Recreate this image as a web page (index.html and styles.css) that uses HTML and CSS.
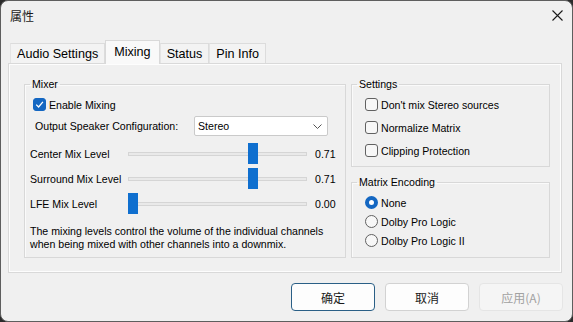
FILE: index.html
```html
<!DOCTYPE html>
<html lang="zh-CN">
<head>
    <meta charset="UTF-8">
    <meta name="viewport" content="width=device-width, initial-scale=1.0">
    <title>属性</title>
    <link rel="stylesheet" href="styles.css">
</head>
<body>
    <div class="window">
        <div class="titlebar">
            <span class="title">属性</span>
            <svg class="close" width="11" height="11" viewBox="0 0 11 11">
                <path d="M0.5 0.5 L10.5 10.5 M10.5 0.5 L0.5 10.5" stroke="#1a1a1a" stroke-width="1.1" fill="none"/>
            </svg>
        </div>

        <div class="tabs">
            <div class="tab">Audio Settings</div>
            <div class="tab active">Mixing</div>
            <div class="tab">Status</div>
            <div class="tab">Pin Info</div>
        </div>

        <div class="panel">
            <div class="columns">
                <fieldset class="group mixer">
                    <legend>Mixer</legend>
                    <div class="check-row enable">
                        <span class="box checked">
                            <svg width="9" height="9" viewBox="0 0 9 9">
                                <path d="M1.2 4.6 L3.6 7 L7.9 1.8" stroke="#fff" stroke-width="1.3" fill="none"/>
                            </svg>
                        </span>
                        Enable Mixing
                    </div>
                    <div class="speaker-row">
                        <span class="speaker-label">Output Speaker Configuration:</span>
                        <div class="select">
                            <span>Stereo</span>
                            <svg width="9" height="5" viewBox="0 0 9 5">
                                <path d="M0.5 0.5 L4.5 4.5 L8.5 0.5" stroke="#555" stroke-width="1" fill="none"/>
                            </svg>
                        </div>
                    </div>
                    <div id="sliderList"></div>
                    <p class="note">The mixing levels control the volume of the individual channels<br>when being mixed with other channels into a downmix.</p>
                </fieldset>

                <div class="side">
                    <fieldset class="group settings">
                        <legend>Settings</legend>
                        <div class="check-row"><span class="box"></span>Don't mix Stereo sources</div>
                        <div class="check-row"><span class="box"></span>Normalize Matrix</div>
                        <div class="check-row"><span class="box"></span>Clipping Protection</div>
                    </fieldset>
                    <fieldset class="group encoding">
                        <legend>Matrix Encoding</legend>
                        <div class="radio-row"><span class="radio on"></span>None</div>
                        <div class="radio-row"><span class="radio"></span>Dolby Pro Logic</div>
                        <div class="radio-row"><span class="radio"></span>Dolby Pro Logic II</div>
                    </fieldset>
                </div>
            </div>
        </div>

        <div class="buttons">
            <button class="btn default">确定</button>
            <button class="btn">取消</button>
            <button class="btn" disabled>应用(A)</button>
        </div>
    </div>

    <script>
        const sliderListDiv = document.getElementById('sliderList');

        const levels = [
            { name: 'Center Mix Level', value: 0.71 },
            { name: 'Surround Mix Level', value: 0.71 },
            { name: 'LFE Mix Level', value: 0 },
        ];

        // track is 179px, thumb is 10px wide
        const travel = 169;

        levels.forEach(level => {
            const row = document.createElement('div');
            row.classList.add('slider-row');
            row.innerHTML = `
                <span class="slider-label">${level.name}</span>
                <div class="track">
                    <div class="rail"></div>
                    <div class="thumb" style="left: ${Math.round(level.value * travel)}px"></div>
                </div>
                <span class="slider-value">${level.value.toFixed(2)}</span>
            `;
            sliderListDiv.appendChild(row);
        });
    </script>
</body>
</html>
```

FILE: styles.css
```css
body {
    margin: 0;
    background-color: #2b2b2b;
}

.window {
    width: 573px;
    height: 322px;
    box-sizing: border-box;
    border: 1px solid #5e5e5e;
    border-radius: 8px;
    background-color: #f0f0f0;
    overflow: hidden;
    display: flex;
    flex-direction: column;
    font-family: "Liberation Sans", "Noto Sans CJK SC", sans-serif;
    font-size: 10.6px;
    color: #000;
}

.titlebar {
    height: 28px;
    flex-shrink: 0;
    display: flex;
    align-items: center;
    justify-content: space-between;
    padding: 0 9px;
}

.title {
    font-family: "Noto Sans CJK SC", sans-serif;
    font-size: 12px;
    color: #1a1a1a;
}

.tabs {
    display: flex;
    align-items: flex-end;
    height: 23px;
    margin-top: 11px;
    padding-left: 9px;
    flex-shrink: 0;
}

.tab {
    height: 20px;
    line-height: 20px;
    padding: 0 6px;
    box-sizing: border-box;
    border: 1px solid #dcdcdc;
    border-bottom: none;
    border-left-color: #e4e4e4;
    background-color: #f3f3f3;
    font-size: 12.6px;
    white-space: nowrap;
}

.tab.active {
    height: 24px;
    line-height: 22px;
    padding: 0 8px;
    margin-bottom: -1px;
    background-color: #f9f9f9;
    border-color: #d9d9d9;
    position: relative;
    z-index: 1;
}

.panel {
    height: 210px;
    margin: 0 10px 0 7px;
    box-sizing: border-box;
    border: 1px solid #d9d9d9;
    box-shadow: inset 0 0 0 1px #fdfdfd;
    padding: 14px 11px 0 15px;
    flex-shrink: 0;
}

.columns {
    display: flex;
    gap: 5px;
}

.group {
    margin: 0;
    padding: 0;
    min-width: 0;
    border: 1px solid #d8d8d8;
    box-shadow: inset 1px 1px 0 #fafafa;
}

.group legend {
    margin-left: 5px;
    padding: 0 2px;
    line-height: 13px;
}

.mixer {
    width: 322px;
    box-sizing: border-box;
    padding-bottom: 6px;
}

.side {
    width: 199px;
    display: flex;
    flex-direction: column;
    gap: 9px;
}

.settings {
    padding-bottom: 9px;
}

.encoding {
    flex: 1;
}

.check-row, .radio-row {
    display: flex;
    align-items: center;
    height: 13px;
    gap: 3px;
    white-space: nowrap;
}

.settings .check-row, .encoding .radio-row {
    padding-left: 13px;
}

.check-row {
    margin-top: 10px;
}

.settings .check-row:first-of-type {
    margin-top: 7px;
}

.check-row.enable {
    margin-top: 7px;
    padding-left: 8px;
}

.radio-row {
    margin-top: 6px;
}

.encoding .radio-row:first-of-type {
    margin-top: 7px;
}

.box {
    width: 13px;
    height: 13px;
    box-sizing: border-box;
    border: 1px solid #616161;
    border-radius: 3px;
    background-color: #f7f7f7;
    display: flex;
    align-items: center;
    justify-content: center;
    flex-shrink: 0;
}

.box.checked {
    background-color: #1467c2;
    border-color: #1467c2;
}

.radio {
    width: 13px;
    height: 13px;
    box-sizing: border-box;
    border: 1px solid #616161;
    border-radius: 50%;
    background-color: #f7f7f7;
    flex-shrink: 0;
}

.radio.on {
    border: 4px solid #1467c2;
    background-color: #fff;
}

.speaker-row {
    display: flex;
    align-items: center;
    margin-top: 5px;
    padding-left: 10px;
    height: 20px;
}

.speaker-label {
    width: 159px;
    white-space: nowrap;
}

.select {
    width: 134px;
    height: 20px;
    box-sizing: border-box;
    border: 1px solid #cacaca;
    border-radius: 2px;
    background-color: #fff;
    display: flex;
    align-items: center;
    justify-content: space-between;
    padding: 0 5px 0 3px;
}

.slider-row {
    display: flex;
    align-items: center;
    height: 21px;
    margin-top: 4px;
    padding-left: 5px;
}

.slider-row:first-child {
    margin-top: 7px;
}

.slider-label {
    width: 98px;
    white-space: nowrap;
}

.track {
    width: 179px;
    height: 21px;
    position: relative;
    display: flex;
    align-items: center;
}

.rail {
    width: 100%;
    height: 2px;
    border: 1px solid #d5d5d5;
    background-color: #e9e9e9;
}

.thumb {
    position: absolute;
    top: 0;
    width: 10px;
    height: 21px;
    background-color: #0f6fcf;
}

.slider-value {
    margin-left: 8px;
}

.note {
    margin: 11px 0 0 5px;
    line-height: 13px;
    white-space: nowrap;
}

.buttons {
    display: flex;
    justify-content: flex-end;
    gap: 10px;
    margin-top: 10px;
    padding-right: 9px;
}

.btn {
    width: 84px;
    height: 28px;
    box-sizing: border-box;
    border: 1px solid #d2d2d2;
    border-radius: 4px;
    background-color: #fdfdfd;
    font-family: "Noto Sans CJK SC", sans-serif;
    font-size: 12px;
    color: #1a1a1a;
    padding: 0;
}

.btn.default {
    border-color: #2a5f86;
}

.btn:disabled {
    background-color: #f5f5f5;
    border-color: #e5e5e5;
    color: #a2a2a2;
}
```
